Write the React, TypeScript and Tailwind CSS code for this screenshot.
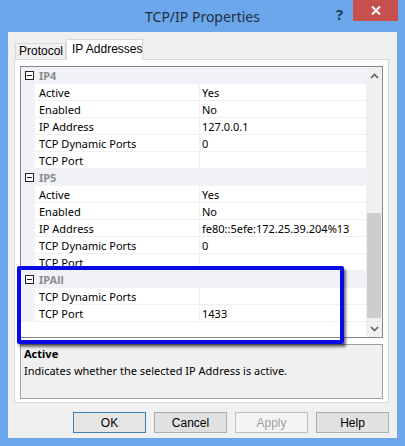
import React from 'react';

const ui = { fontFamily: '"Noto Sans", "Open Sans", sans-serif' };
const classic = { fontFamily: '"Liberation Sans", Arial, sans-serif' };

type Prop = { name: string; value?: string };

const groups: { title: string; props: Prop[] }[] = [
  {
    title: 'IP4',
    props: [
      { name: 'Active', value: 'Yes' },
      { name: 'Enabled', value: 'No' },
      { name: 'IP Address', value: '127.0.0.1' },
      { name: 'TCP Dynamic Ports', value: '0' },
      { name: 'TCP Port', value: '' },
    ],
  },
  {
    title: 'IP5',
    props: [
      { name: 'Active', value: 'Yes' },
      { name: 'Enabled', value: 'No' },
      { name: 'IP Address', value: 'fe80::5efe:172.25.39.204%13' },
      { name: 'TCP Dynamic Ports', value: '0' },
      { name: 'TCP Port', value: '' },
    ],
  },
  {
    title: 'IPAll',
    props: [
      { name: 'TCP Dynamic Ports', value: '' },
      { name: 'TCP Port', value: '1433' },
    ],
  },
];

const MinusBox = () => (
  <div className="w-[9px] h-[9px] border border-[#222] bg-white flex items-center justify-center">
    <div className="w-[5px] h-px bg-[#222]" />
  </div>
);

const Category = ({ title }: { title: string }) => (
  <div className="flex h-[17px] bg-[#f0f2f7] items-center">
    <div className="w-[14px] flex justify-center pl-[2px]">
      <MinusBox />
    </div>
    <span className="pl-[4px] pt-[2px] text-[11px] font-bold text-[#8c8c8c]">{title}</span>
  </div>
);

const Row = ({ name, value }: Prop) => (
  <div className="flex h-[17px]">
    <div className="w-[14px] bg-[#f0f2f7]" />
    <div className="w-[165px] border-b border-r border-[#f0f0f0] bg-white pl-[4px] pt-[2px] text-[11px] leading-[14px] text-black whitespace-nowrap">
      {name}
    </div>
    <div className="flex-1 border-b border-[#f0f0f0] bg-white pl-[2px] pt-[2px] text-[11px] leading-[14px] text-black whitespace-nowrap">
      {value}
    </div>
  </div>
);

const Chevron = ({ up }: { up?: boolean }) => (
  <svg width="9" height="6" viewBox="0 0 9 6">
    <path
      d={up ? 'M1 5 L4.5 1.5 L8 5' : 'M1 1 L4.5 4.5 L8 1'}
      fill="none"
      stroke="#606060"
      strokeWidth="1.6"
    />
  </svg>
);

const Button = ({ label, primary, disabled }: { label: string; primary?: boolean; disabled?: boolean }) => (
  <div
    style={classic}
    className={`w-[73px] h-[21px] flex items-center justify-center text-[12px] border ${
      primary
        ? 'border-[#3c7fb1] bg-[#e5e5e5] text-black'
        : disabled
        ? 'border-[#bfbfbf] bg-[#f4f4f4] text-[#a0a0a0]'
        : 'border-[#adadad] bg-[#e1e1e1] text-black'
    }`}
  >
    {label}
  </div>
);

export default function App() {
  return (
    <div className="relative w-[405px] h-[446px] bg-[#6ba7ea] flex flex-col overflow-hidden" style={ui}>
      {/* Title bar */}
      <div className="relative h-[32px] flex items-center justify-center">
        <span className="text-[14px] text-[#1e2f44] mt-[1px]">TCP/IP Properties</span>
        <span className="absolute left-[336px] top-[3px] text-[15px] font-bold text-[#203a5e]">?</span>
        <div className="absolute left-[353px] top-0 w-[45px] h-[21px] bg-[#c7504f] flex items-center justify-center">
          <svg width="10" height="9" viewBox="0 0 10 9">
            <path d="M1 0.5 L9 8.5 M9 0.5 L1 8.5" stroke="white" strokeWidth="2" />
          </svg>
        </div>
      </div>

      {/* Client area */}
      <div className="ml-[8px] mr-[8px] h-[406px] bg-[#f0f0f0] flex flex-col">
        {/* Tabs */}
        <div className="flex items-end h-[27px] pl-[7px] pt-[7px]">
          <div
            style={classic}
            className="h-[16px] w-[51px] border border-b-0 border-[#d9d9d9] bg-[#f0f0f0] text-[12px] leading-[15px] pl-[3px] text-black whitespace-nowrap"
          >
            Protocol
          </div>
          <div
            style={classic}
            className="h-[21px] w-[77px] border border-b-0 border-[#d9d9d9] bg-white text-[12px] leading-[18px] pl-[5px] text-black whitespace-nowrap -mb-px relative z-10"
          >
            IP Addresses
          </div>
        </div>

        {/* Tab panel */}
        <div className="ml-[6px] w-[375px] h-[344px] border border-[#d9d9d9] bg-white flex flex-col px-[5px] pt-[6px]">
          {/* Property grid */}
          <div className="h-[272px] border border-[#828790] flex bg-white">
            <div className="flex-1 flex flex-col">
              {groups.map((g) => (
                <React.Fragment key={g.title}>
                  <Category title={g.title} />
                  {g.props.map((p, i) => (
                    <Row key={g.title + i} name={p.name} value={p.value} />
                  ))}
                </React.Fragment>
              ))}
            </div>
            <div className="w-[16px] bg-[#f0f0f0] flex flex-col">
              <div className="h-[17px] flex items-center justify-center">
                <Chevron up />
              </div>
              <div className="flex-1 flex flex-col">
                <div className="h-[129px]" />
                <div className="h-[105px] mx-px bg-[#cdcdcd]" />
              </div>
              <div className="h-[17px] flex items-center justify-center">
                <Chevron />
              </div>
            </div>
          </div>

          {/* Description */}
          <div className="mt-[6px] h-[55px] border border-[#a0a0a0] bg-[#f0f0f0] px-[3px] text-[11px] text-black">
            <div className="font-bold leading-[17px]">Active</div>
            <div className="leading-[17px]">Indicates whether the selected IP Address is active.</div>
          </div>
        </div>

        {/* Buttons */}
        <div className="flex justify-end gap-[8px] pr-[8px] mt-[9px]">
          <Button label="OK" primary />
          <Button label="Cancel" />
          <Button label="Apply" disabled />
          <Button label="Help" />
        </div>
      </div>

      {/* Highlight annotation */}
      <div className="absolute left-[17px] top-[266px] w-[327px] h-[78px] border-[4px] border-[#0a0ae8] rounded-[2px] shadow-[2px_3px_3px_rgba(0,0,0,0.55)]" />
    </div>
  );
}
